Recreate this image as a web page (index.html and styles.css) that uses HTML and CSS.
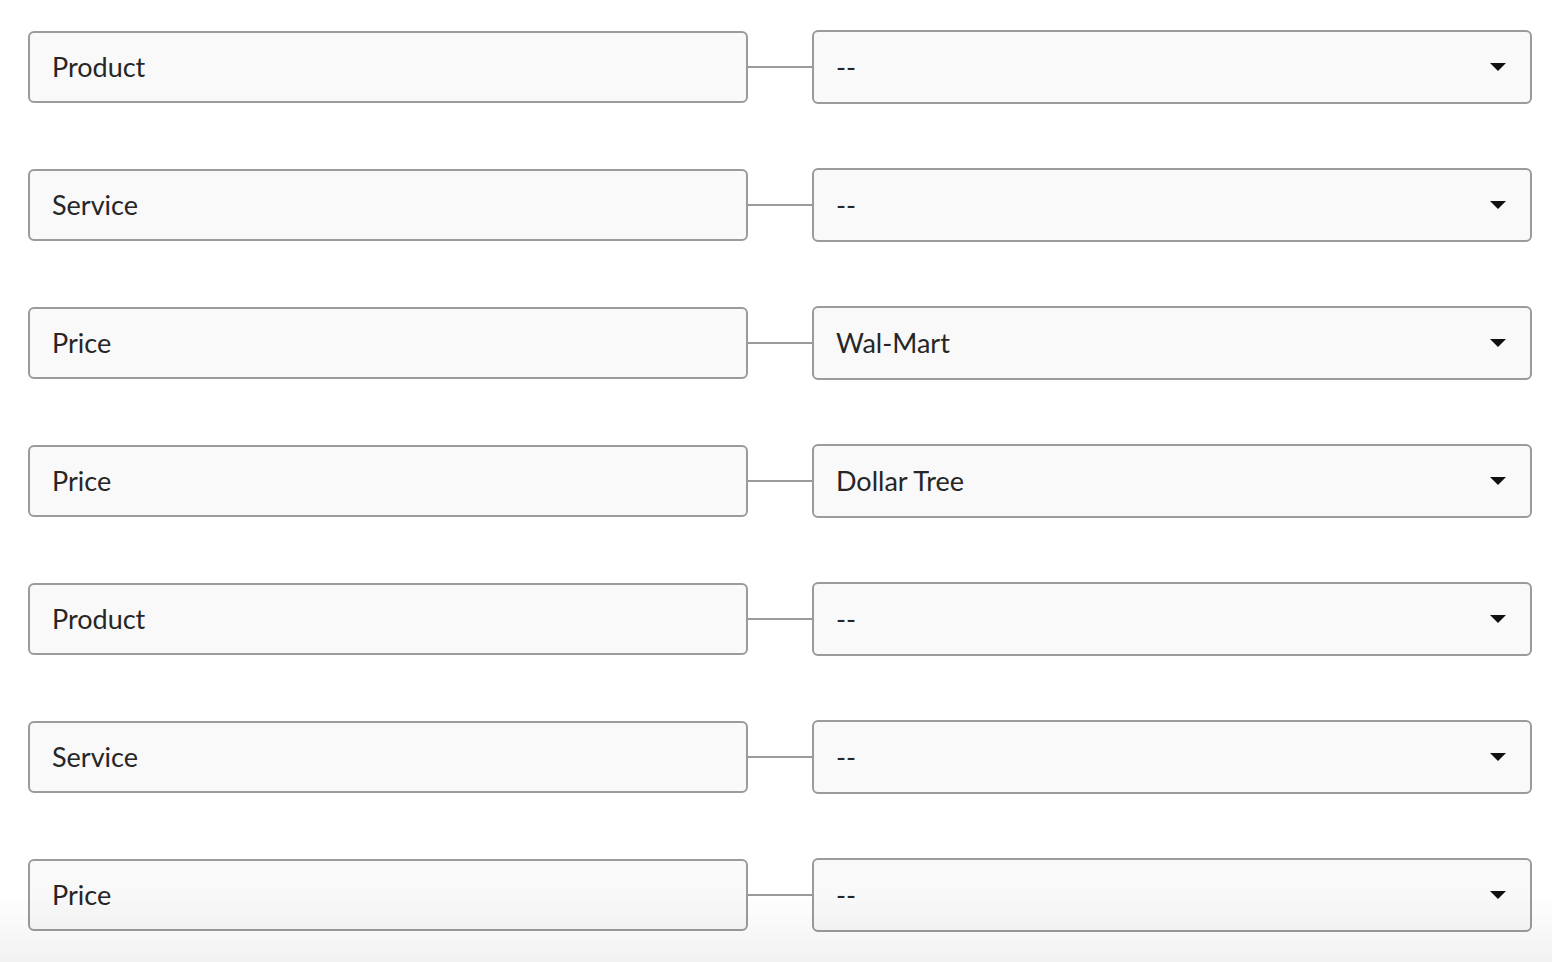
FILE: index.html
```html
<!DOCTYPE html>
<html>
<head>
<meta charset="utf-8">
<link rel="stylesheet" href="styles.css">
</head>
<body>
<div class="mapping">
  <div class="row">
    <div class="field">Product</div>
    <div class="link"></div>
    <div class="select"><span>--</span><span class="caret"></span></div>
  </div>
  <div class="row">
    <div class="field">Service</div>
    <div class="link"></div>
    <div class="select"><span>--</span><span class="caret"></span></div>
  </div>
  <div class="row">
    <div class="field">Price</div>
    <div class="link"></div>
    <div class="select"><span>Wal-Mart</span><span class="caret"></span></div>
  </div>
  <div class="row">
    <div class="field">Price</div>
    <div class="link"></div>
    <div class="select"><span>Dollar Tree</span><span class="caret"></span></div>
  </div>
  <div class="row">
    <div class="field">Product</div>
    <div class="link"></div>
    <div class="select"><span>--</span><span class="caret"></span></div>
  </div>
  <div class="row">
    <div class="field">Service</div>
    <div class="link"></div>
    <div class="select"><span>--</span><span class="caret"></span></div>
  </div>
  <div class="row">
    <div class="field">Price</div>
    <div class="link"></div>
    <div class="select"><span>--</span><span class="caret"></span></div>
  </div>
</div>
<div class="fade"></div>
</body>
</html>
```
FILE: styles.css
```css
html, body {
  margin: 0;
  padding: 0;
  background: #ffffff;
  overflow: hidden;
}
body {
  font-family: Lato, "Open Sans", sans-serif;
  color: #262626;
}
.mapping {
  display: flex;
  flex-direction: column;
  gap: 64px;
  padding: 30px 20px 0 28px;
}
.row {
  display: flex;
  align-items: center;
  height: 74px;
}
.field, .select {
  box-sizing: border-box;
  width: 720px;
  background: #f9f9f9;
  border: 2px solid #9b9b9b;
  border-radius: 6px;
  display: flex;
  align-items: center;
  font-size: 27px;
  padding-left: 22px;
  padding-bottom: 2px;
}
.field {
  height: 72px;
}
.select {
  height: 74px;
  justify-content: space-between;
  padding-right: 24px;
}
.link {
  width: 64px;
  height: 2px;
  background: #9b9b9b;
}
.caret {
  width: 0;
  height: 0;
  margin-top: 2px;
  border-left: 8px solid transparent;
  border-right: 8px solid transparent;
  border-top: 8px solid #111111;
}
.fade {
  position: fixed;
  left: 0;
  right: 0;
  bottom: 0;
  height: 70px;
  background: linear-gradient(to bottom, rgba(0,0,0,0), rgba(0,0,0,0.05));
  pointer-events: none;
}
```
